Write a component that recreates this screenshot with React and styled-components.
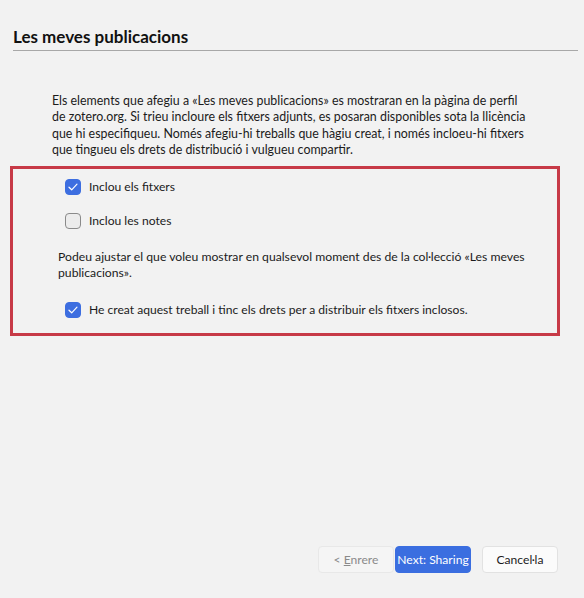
import styled, { createGlobalStyle } from 'styled-components';

const GlobalStyle = createGlobalStyle`
  html, body {
    margin: 0;
    padding: 0;
    background: #f2f2f2;
  }

  body {
    font-family: Lato, "Noto Sans", sans-serif;
    color: #1b1b1b;
  }
`;

const Wizard = styled.div`
  width: 584px;
  height: 598px;
  display: flex;
  flex-direction: column;
  box-sizing: border-box;
  background: #f2f2f2;
`;

const Header = styled.header`
  margin: 0 6px 0 13px;
  padding-top: 28px;
  padding-bottom: 4px;
  border-bottom: 1px solid #a8a8a8;

  h1 {
    margin: 0;
    font-size: 17px;
    font-weight: 700;
    line-height: 18px;
    color: #111;
  }
`;

const Body = styled.main`
  flex: 1;
  display: flex;
  flex-direction: column;
`;

const Intro = styled.p`
  margin: 42px 0 0 52px;
  width: 480px;
  font-size: 12.4px;
  line-height: 16.3px;
`;

const Highlight = styled.section`
  margin: 8px 0 0 10px;
  width: 550px;
  height: 170px;
  box-sizing: border-box;
  border: 3px solid #c73a47;
  padding: 8px 0 0 52px;
  display: flex;
  flex-direction: column;
`;

const CheckRow = styled.label`
  display: flex;
  align-items: center;
  gap: 8px;
  height: 19px;
  font-size: 12.1px;
  margin-top: ${({ $top }) => $top || 0}px;
`;

const Box = styled.span`
  width: 16px;
  height: 16px;
  box-sizing: border-box;
  border-radius: 4px;
  display: inline-flex;
  align-items: center;
  justify-content: center;
  background: ${({ $checked }) => ($checked ? '#3d6ee0' : '#ececec')};
  border: 1px solid ${({ $checked }) => ($checked ? '#3d6ee0' : '#8a8a8a')};
`;

const Note = styled.p`
  margin: 19px 0 0 -7px;
  font-size: 12.2px;
  line-height: 16px;
  width: 482px;
`;

const Footer = styled.footer`
  display: flex;
  justify-content: flex-end;
  padding: 0 26px 25px 0;
`;

const Button = styled.button`
  width: 76px;
  height: 27px;
  box-sizing: border-box;
  padding: 0;
  font-family: inherit;
  font-size: 12.1px;
  border-radius: 4px;
  border: 1px solid #e2e2e2;
  background: #fbfbfb;
  color: #1b1b1b;

  ${({ $variant }) => $variant === 'primary' && `
    background: #3b6ee0;
    border-color: #3b6ee0;
    color: #fff;
    margin-left: 1px;
    margin-right: 11px;
  `}

  ${({ $variant }) => $variant === 'disabled' && `
    background: #f5f5f5;
    border-color: #e8e8e8;
    color: #8a8a8a;
  `}

  u {
    text-decoration-thickness: 1px;
  }
`;

function Check({ checked }) {
  return (
    <Box $checked={checked}>
      {checked && (
        <svg width="10" height="8" viewBox="0 0 10 8" fill="none">
          <path d="M1 4.2 L3.7 6.8 L9 1.2" stroke="#fff" strokeWidth="1.2" strokeLinecap="round" strokeLinejoin="round" />
        </svg>
      )}
    </Box>
  );
}

export default function App() {
  return (
    <Wizard>
      <GlobalStyle />
      <Header>
        <h1>Les meves publicacions</h1>
      </Header>
      <Body>
        <Intro>
          Els elements que afegiu a «Les meves publicacions» es mostraran en la pàgina de perfil
          de zotero.org. Si trieu incloure els fitxers adjunts, es posaran disponibles sota la llicència
          que hi especifiqueu. Només afegiu-hi treballs que hàgiu creat, i només incloeu-hi fitxers
          que tingueu els drets de distribució i vulgueu compartir.
        </Intro>
        <Highlight>
          <CheckRow>
            <Check checked />
            Inclou els fitxers
          </CheckRow>
          <CheckRow $top={15}>
            <Check />
            Inclou les notes
          </CheckRow>
          <Note>
            Podeu ajustar el que voleu mostrar en qualsevol moment des de la col·lecció «Les meves
            publicacions».
          </Note>
          <CheckRow $top={19}>
            <Check checked />
            He creat aquest treball i tinc els drets per a distribuir els fitxers inclosos.
          </CheckRow>
        </Highlight>
      </Body>
      <Footer>
        <Button $variant="disabled" disabled>
          &lt; <u>E</u>nrere
        </Button>
        <Button $variant="primary">Next: Sharing</Button>
        <Button>Cancel·la</Button>
      </Footer>
    </Wizard>
  );
}
